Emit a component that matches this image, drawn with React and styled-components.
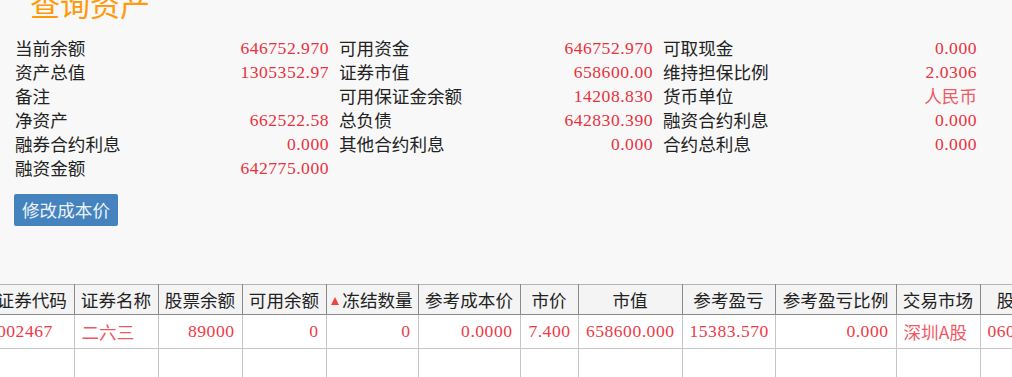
import React from "react";
import styled, { createGlobalStyle } from "styled-components";

const Global = createGlobalStyle`
  html, body { margin: 0; padding: 0; background: #f8f8f8; }
  body {
    font-family: "Liberation Serif", "Noto Sans CJK SC", serif;
    font-size: 17.6px;
    color: #222;
    overflow: hidden;
  }
`;

const Page = styled.div`
  width: 1012px;
  height: 377px;
  overflow: hidden;
  display: flex;
  flex-direction: column;
`;

const Title = styled.h1`
  margin: -12px 0 0 30px;
  font-family: "Noto Sans CJK SC", sans-serif;
  font-size: 30px;
  line-height: 30px;
  font-weight: 400;
  color: #ff9a0a;
`;

const InfoGrid = styled.div`
  margin-top: 18px;
  padding-left: 15px;
  display: grid;
  grid-template-columns: repeat(3, 314px);
  column-gap: 10px;
  grid-auto-rows: 24px;
`;

const InfoCell = styled.div`
  display: flex;
  justify-content: space-between;
  align-items: center;
  line-height: 24px;
  white-space: nowrap;
`;

const Label = styled.span`
  font-family: "Noto Sans CJK SC", sans-serif;
  color: #222;
`;

const Value = styled.span`
  color: #e8323e;
  font-family: ${(p) => (p.$cjk ? '"Noto Sans CJK SC", sans-serif' : '"Liberation Serif", serif')};
  letter-spacing: ${(p) => (p.$cjk ? "0" : "0.5px")};
  opacity: ${(p) => (p.$cjk ? 0.8 : 1)};
`;

const EditButton = styled.button`
  align-self: flex-start;
  margin: 14px 0 0 14px;
  width: 104px;
  height: 32px;
  padding: 0;
  border: none;
  border-radius: 2px;
  background: #4583be;
  color: #eef3f8;
  font-family: "Noto Sans CJK SC", sans-serif;
  font-size: 17.6px;
  line-height: 32px;
  cursor: pointer;
`;

const TableWrap = styled.div`
  margin-top: 58px;
  overflow: hidden;
  flex: 1;
`;

const Table = styled.table`
  margin-left: -10px;
  border-collapse: collapse;
  table-layout: fixed;
  width: 1094px;
  background: #fff;
`;

const HeadCell = styled.th`
  height: 29px;
  padding: 0 4px;
  background: #f4f4f4;
  border-top: 1px solid #b4b4b4;
  border-bottom: 1px solid #8a8a8a;
  border-right: 1px solid #8a8a8a;
  font-family: "Noto Sans CJK SC", sans-serif;
  font-weight: 400;
  color: #222;
  text-align: center;
  white-space: nowrap;
  overflow: hidden;
`;

const SortMark = styled.span`
  display: inline-block;
  width: 0;
  height: 0;
  border-left: 4px solid transparent;
  border-right: 4px solid transparent;
  border-bottom: 8px solid #ee4444;
  margin-right: 3px;
  vertical-align: 2px;
`;

const Cell = styled.td`
  height: 33px;
  padding: 0 7px;
  border-right: 1px solid #c6c6c6;
  border-bottom: 1px solid #c6c6c6;
  color: #ee3a48;
  text-align: ${(p) => (p.$left ? "left" : "right")};
  white-space: nowrap;
  overflow: hidden;
  letter-spacing: ${(p) => (p.$cjk ? "0" : "0.5px")};
  font-family: ${(p) => (p.$cjk ? '"Noto Sans CJK SC", sans-serif' : '"Liberation Serif", "Noto Sans CJK SC", serif')};
  opacity: ${(p) => (p.$cjk ? 0.85 : 1)};
`;

const info = [
  [["当前余额", "646752.970"], ["可用资金", "646752.970"], ["可取现金", "0.000"]],
  [["资产总值", "1305352.97"], ["证券市值", "658600.00"], ["维持担保比例", "2.0306"]],
  [["备注", ""], ["可用保证金余额", "14208.830"], ["货币单位", "人民币", true]],
  [["净资产", "662522.58"], ["总负债", "642830.390"], ["融资合约利息", "0.000"]],
  [["融券合约利息", "0.000"], ["其他合约利息", "0.000"], ["合约总利息", "0.000"]],
  [["融资金额", "642775.000"], null, null],
];

const columns = [
  { title: "证券代码", width: 84, left: true },
  { title: "证券名称", width: 84, left: true, cjk: true },
  { title: "股票余额", width: 84 },
  { title: "可用余额", width: 84 },
  { title: "冻结数量", width: 92, sort: true },
  { title: "参考成本价", width: 102 },
  { title: "市价", width: 58 },
  { title: "市值", width: 104 },
  { title: "参考盈亏", width: 93 },
  { title: "参考盈亏比例", width: 121 },
  { title: "交易市场", width: 84, left: true, cjk: true },
  { title: "股东代码", width: 104, left: true },
];

const row = [
  "002467", "二六三", "89000", "0", "0", "0.0000", "7.400",
  "658600.000", "15383.570", "0.000", "深圳A股", "0601234567",
];

export default function App() {
  return (
    <>
      <Global />
      <Page>
        <Title>查询资产</Title>
        <InfoGrid>
          {info.flatMap((r, ri) =>
            r.map((c, ci) => (
              <InfoCell key={`${ri}-${ci}`}>
                {c && (
                  <>
                    <Label>{c[0]}</Label>
                    <Value $cjk={c[2]}>{c[1]}</Value>
                  </>
                )}
              </InfoCell>
            ))
          )}
        </InfoGrid>
        <EditButton>修改成本价</EditButton>
        <TableWrap>
          <Table>
            <colgroup>
              {columns.map((c) => (
                <col key={c.title} style={{ width: c.width }} />
              ))}
            </colgroup>
            <thead>
              <tr>
                {columns.map((c) => (
                  <HeadCell key={c.title}>
                    {c.sort && <SortMark />}
                    {c.title}
                  </HeadCell>
                ))}
              </tr>
            </thead>
            <tbody>
              <tr>
                {row.map((v, i) => (
                  <Cell key={i} $left={columns[i].left} $cjk={columns[i].cjk}>
                    {v}
                  </Cell>
                ))}
              </tr>
              <tr>
                {row.map((v, i) => (
                  <Cell key={i} />
                ))}
              </tr>
            </tbody>
          </Table>
        </TableWrap>
      </Page>
    </>
  );
}
